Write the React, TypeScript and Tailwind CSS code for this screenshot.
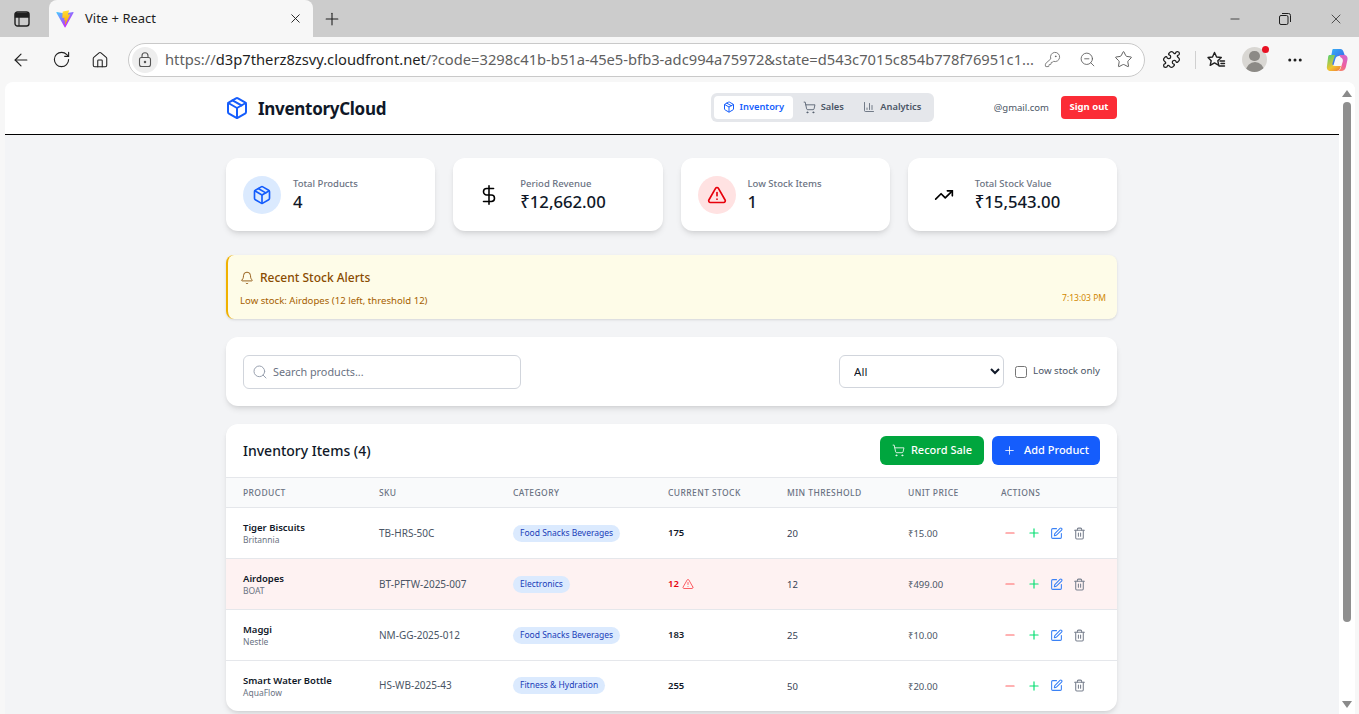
import {
  ArrowLeft,
  Bell,
  ChartColumn,
  DollarSign,
  Ellipsis,
  House,
  KeyRound,
  Minus,
  Package,
  Plus,
  Puzzle,
  RotateCw,
  Search,
  ShoppingCart,
  SquarePen,
  Star,
  Trash2,
  TrendingUp,
  TriangleAlert,
  X,
  ZoomOut,
} from "lucide-react"

const products = [
  { name: "Tiger Biscuits", brand: "Britannia", sku: "TB-HRS-50C", category: "Food Snacks Beverages", stock: 175, min: 20, price: "₹15.00" },
  { name: "Airdopes", brand: "BOAT", sku: "BT-PFTW-2025-007", category: "Electronics", stock: 12, min: 12, price: "₹499.00", low: true },
  { name: "Maggi", brand: "Nestle", sku: "NM-GG-2025-012", category: "Food Snacks Beverages", stock: 183, min: 25, price: "₹10.00" },
  { name: "Smart Water Bottle", brand: "AquaFlow", sku: "HS-WB-2025-43", category: "Fitness & Hydration", stock: 255, min: 50, price: "₹20.00" },
]

function ViteLogo() {
  return (
    <svg width="18" height="18" viewBox="0 0 410 404">
      <defs>
        <linearGradient id="vite-a" x1="6" y1="33" x2="235" y2="344" gradientUnits="userSpaceOnUse">
          <stop stopColor="#41D1FF" />
          <stop offset="1" stopColor="#BD34FE" />
        </linearGradient>
        <linearGradient id="vite-b" x1="194" y1="8" x2="236" y2="293" gradientUnits="userSpaceOnUse">
          <stop stopColor="#FFEA83" />
          <stop offset="0.08" stopColor="#FFDD35" />
          <stop offset="1" stopColor="#FFA800" />
        </linearGradient>
      </defs>
      <path d="M399.6 59.5 215 389.7c-3.8 6.8-13.6 6.9-17.5.1L9.3 59.5c-4.2-7.4 2.1-16.4 10.5-14.9l184.8 33a10 10 0 0 0 3.6 0l180.9-33c8.4-1.5 14.7 7.4 10.5 14.9Z" fill="url(#vite-a)" />
      <path d="M292.9 1.6 156.3 28.4a5 5 0 0 0-4 4.6l-8.4 141.9a5 5 0 0 0 6.1 5.2l38-8.8a5 5 0 0 1 6 5.9l-11.3 55.2a5 5 0 0 0 6.4 5.8l23.5-7.1a5 5 0 0 1 6.4 5.8l-18 87c-1.1 5.4 6.1 8.4 9.1 3.7l2-3.1 111.4-222.3c1.9-3.7-1.3-8-5.4-7.2l-39.2 7.6a5 5 0 0 1-5.8-6.3l25.6-88.7a5 5 0 0 0-5.8-6.4Z" fill="url(#vite-b)" />
    </svg>
  )
}

function CopilotLogo() {
  return (
    <svg width="26" height="26" viewBox="0 0 26 26">
      <defs>
        <linearGradient id="cop-a" x1="4" y1="3" x2="17" y2="18" gradientUnits="userSpaceOnUse">
          <stop stopColor="#36b6f5" />
          <stop offset="1" stopColor="#3b5be8" />
        </linearGradient>
        <linearGradient id="cop-b" x1="3" y1="10" x2="14" y2="25" gradientUnits="userSpaceOnUse">
          <stop stopColor="#5fce6a" />
          <stop offset="0.6" stopColor="#f0c52e" />
          <stop offset="1" stopColor="#f27d3a" />
        </linearGradient>
        <linearGradient id="cop-c" x1="24" y1="6" x2="12" y2="23" gradientUnits="userSpaceOnUse">
          <stop stopColor="#c66be0" />
          <stop offset="0.6" stopColor="#ee5fa0" />
          <stop offset="1" stopColor="#f78a5a" />
        </linearGradient>
      </defs>
      <path d="M9 2h7.5c1.5 0 2.4 1 2.9 2.4L21 9h-6c-2 0-3 1-3.6 2.8L9.500 18H5L8 5c.2-1.800.6-3 1-3Z" fill="url(#cop-a)" />
      <path d="M5.500 8h5.500l-2.500 8c-.5 2 .5 3 2.500 3h6l-1 2.600c-.5 1.400-1.500 2.400-3.500 2.400H7c-3 0-4.700-2-4-5l1-8c.2-1.800.6-3 1.500-3Z" fill="url(#cop-b)" />
      <path d="M15 8h5c2.500 0 4 2 3.500 4.500l-1.500 7c-.5 3-2.500 4.500-5 4.500h-3c1.500-.5 2.300-1.500 2.800-3l2-6.500c.5-2-.6-3.500-2-4L15 8Z" fill="url(#cop-c)" />
    </svg>
  )
}

function TabsIcon() {
  return (
    <svg width="16" height="16" viewBox="0 0 16 16" fill="none" stroke="#1f1f1f" strokeWidth="1.400">
      <rect x="1" y="1" width="14" height="14" rx="2.500" />
      <path d="M1.500 2.500h13v3.500h-13z" fill="#1f1f1f" />
      <path d="M5 6v9" strokeWidth="1.100" />
    </svg>
  )
}

function RestoreIcon() {
  return (
    <svg width="12" height="12" viewBox="0 0 12 12" fill="none" stroke="#1f1f1f" strokeWidth="1">
      <rect x="0.500" y="2.500" width="8.500" height="9" rx="1.500" />
      <path d="M3 .5h6.500a2 2 0 0 1 2 2V9" />
    </svg>
  )
}

function FavoritesIcon() {
  return (
    <svg width="20" height="20" viewBox="0 0 20 20" fill="none" stroke="#1f1f1f" strokeWidth="1.400" strokeLinejoin="round">
      <path d="M8.500 2.500 10.600 7l4.700.5-3.500 3.200 1 4.600-4.300-2.400-4.300 2.400 1-4.600L2 7.500 6.500 7Z" />
      <path d="M14 11h4.500M15 13.500h3.500M13 16h5.500" strokeLinecap="round" />
    </svg>
  )
}

function BrowserChrome() {
  return (
    <>
      <div className="h-[37px] flex bg-[#cccccc] text-[#1f1f1f]">
        <div className="w-[49px] flex items-center justify-center pr-[5px]">
          <TabsIcon />
        </div>
        <div className="w-[264px] h-[37px] rounded-t-lg bg-[#f7f7f7] flex items-center pl-[7px] pr-[10px]">
          <ViteLogo />
          <span className="ml-[11px] text-[13px]">Vite + React</span>
          <X size={15} strokeWidth={1.500} className="ml-auto" />
        </div>
        <div className="w-[38px] flex items-center justify-center">
          <Plus size={20} strokeWidth={1.300} />
        </div>
        <div className="ml-auto flex items-center h-[37px] pr-[15px] gap-[37px]">
          <Minus size={14} strokeWidth={1.300} />
          <RestoreIcon />
          <X size={16} strokeWidth={1.100} />
        </div>
      </div>
      <div className="h-[45px] bg-[#f7f7f7] flex items-center pl-[11px] text-[#1f1f1f]">
        <ArrowLeft size={20} strokeWidth={1.400} />
        <RotateCw size={19} strokeWidth={1.400} className="ml-[21px]" />
        <House size={18} strokeWidth={1.400} className="ml-[20px]" />
        <div className="ml-[19px] w-[1017px] h-[34px] rounded-full border border-[#c9c9c9] bg-white flex items-center pl-[3px] pr-[11px]">
          <div className="w-[26px] h-[26px] rounded-full bg-[#eeeeee] flex items-center justify-center">
            <svg width="14" height="16" viewBox="0 0 14 16" fill="none" stroke="#555" strokeWidth="1.100">
              <rect x="1.500" y="5.500" width="11" height="9" rx="2" />
              <path d="M4 5.500V3.800a3 3 0 0 1 6 0v1.700" />
              <circle cx="7" cy="10" r="0.700" fill="#555" />
            </svg>
          </div>
          <span className="ml-[7px] text-[14.720px] text-[#5f5f5f] whitespace-nowrap">
            https://<span className="text-[#1f1f1f]">d3p7therz8zsvy.cloudfront.net</span>/?code=3298c41b-b51a-45e5-bfb3-adc994a75972&state=d543c7015c854b778f76951c1...
          </span>
          <div className="ml-auto flex items-center gap-[18px] text-[#5a5a5a]">
            <KeyRound size={17} strokeWidth={1.100} />
            <ZoomOut size={17} strokeWidth={1.200} />
            <Star size={19} strokeWidth={1.200} />
          </div>
        </div>
        <Puzzle size={19} strokeWidth={1.600} className="ml-[17px]" />
        <div className="ml-[14px] w-px h-[18px] bg-[#d0d0d0]" />
        <div className="ml-[10px]">
          <FavoritesIcon />
        </div>
        <div className="ml-[16px] relative w-[25px] h-[25px]">
          <div className="w-[25px] h-[25px] rounded-full bg-[#d9d7d3] overflow-hidden flex flex-col items-center">
            <div className="mt-[4px] w-[11px] h-[11px] rounded-full bg-[#8c8a86]" />
            <div className="mt-[1px] w-[18px] h-[12px] rounded-t-full bg-[#8c8a86]" />
          </div>
          <div className="absolute -top-[1px] -right-[2px] w-[7px] h-[7px] rounded-full bg-[#e81123]" />
        </div>
        <Ellipsis size={18} strokeWidth={2} className="ml-[19px]" />
        <div className="ml-[20px]">
          <CopilotLogo />
        </div>
      </div>
    </>
  )
}

function Header() {
  return (
    <header className="h-[53px] bg-white border-b border-black shrink-0">
      <div className="ml-[221px] w-[891px] h-full flex items-center">
        <Package size={24} strokeWidth={2} className="text-[#155dfc] -ml-[1px]" />
        <span className="ml-[9px] mt-[2px] text-[17px] font-bold tracking-[-0.300px] text-[#101828]">InventoryCloud</span>
        <nav className="ml-auto -mt-[2px] h-[29px] rounded-md bg-[#e5e7eb] flex items-center p-[3px] text-[9.300px] font-semibold text-[#4a5565]">
          <div className="h-[23px] w-[79px] rounded bg-white text-[#155dfc] flex items-center justify-center gap-[5px]">
            <Package size={12} />
            Inventory
          </div>
          <div className="h-[23px] w-[61px] flex items-center justify-center gap-[5px]">
            <ShoppingCart size={13} strokeWidth={1.500} />
            Sales
          </div>
          <div className="h-[23px] w-[77px] flex items-center justify-center gap-[5px]">
            <ChartColumn size={12} strokeWidth={1.500} />
            Analytics
          </div>
        </nav>
        <span className="ml-[60px] text-[9.500px] text-[#4a5565]">@gmail.com</span>
        <button className="ml-[12px] -mt-[2px] h-[23px] w-[56px] rounded bg-[#fb2c36] text-white text-[9.500px] font-bold">Sign out</button>
      </div>
    </header>
  )
}

function StatCard({ icon, tint, label, value }: { icon: React.ReactNode; tint: string; label: string; value: string }) {
  return (
    <div className="h-[73px] rounded-xl bg-white shadow-md flex items-center px-[17px]">
      <div className={`w-[38px] h-[38px] rounded-full flex items-center justify-center shrink-0 ${tint}`}>{icon}</div>
      <div className="ml-[12px] pt-[1px]">
        <div className="text-[9.500px] leading-[13px] font-medium text-[#6a7282]">{label}</div>
        <div className="text-[16.700px] leading-[24px] font-medium text-[#101828]">{value}</div>
      </div>
    </div>
  )
}

function Row({ p }: { p: (typeof products)[number] }) {
  return (
    <tr className={`h-[51px] last:h-[50px] border-b border-[#e5e7eb] last:border-b-0 ${p.low ? "bg-[#fef2f2]" : ""}`}>
      <td className="pl-[17px] pt-[2px]">
        <div className="text-[9.500px] leading-[12px] font-semibold text-[#101828]">{p.name}</div>
        <div className="text-[8.500px] leading-[12px] text-[#6a7282]">{p.brand}</div>
      </td>
      <td className="pl-[17px] text-[10px] text-[#4a5565]">{p.sku}</td>
      <td className="pl-[17px]">
        <span className="flex w-fit h-[17px] items-center rounded-full bg-[#dbeafe] px-[7px] text-[8.500px] text-[#193cb8] whitespace-nowrap">{p.category}</span>
      </td>
      <td className="pl-[17px] text-[9.500px] font-semibold">
        {p.low ? (
          <span className="flex items-center gap-[3px] text-[#e7000b]">
            {p.stock}
            <TriangleAlert size={12} className="text-[#fb2c36]" strokeWidth={1.500} />
          </span>
        ) : (
          <span className="text-[#101828]">{p.stock}</span>
        )}
      </td>
      <td className="pl-[17px] pt-[2px] text-[9.500px] text-[#364153]">{p.min}</td>
      <td className="pl-[17px] pt-[2px] text-[9.500px] text-[#4a5565]">{p.price}</td>
      <td className="pl-[19px]">
        <div className="flex items-center gap-[9.500px]">
          <Minus size={14} className="text-[#ff6467]" />
          <Plus size={14} className="text-[#05df72]" />
          <SquarePen size={13} className="text-[#3b82f6]" />
          <Trash2 size={13} className="text-[#7b8290]" />
        </div>
      </td>
    </tr>
  )
}

export default function App() {
  return (
    <div className="h-screen overflow-hidden flex flex-col bg-[#f7f7f7] [font-family:'Noto_Sans',sans-serif]">
      <BrowserChrome />
      <div className="flex-1 min-h-0 ml-[5px] mr-[4px] rounded-t-lg overflow-hidden flex bg-white">
        <div className="flex-1 min-w-0 bg-[#f3f4f6] overflow-hidden">
          <Header />
          <main className="ml-[221px] w-[891px] pt-[23px] flex flex-col">
            <div className="grid grid-cols-4 gap-[18px]">
              <StatCard icon={<Package size={20} className="text-[#155dfc]" />} tint="bg-[#dbeafe]" label="Total Products" value="4" />
              <StatCard icon={<DollarSign size={22} strokeWidth={1.700} className="text-black" />} tint="" label="Period Revenue" value="₹12,662.00" />
              <StatCard icon={<TriangleAlert size={20} className="text-[#e7000b]" />} tint="bg-[#ffe2e2]" label="Low Stock Items" value="1" />
              <StatCard icon={<TrendingUp size={20} className="text-black" />} tint="" label="Total Stock Value" value="₹15,543.00" />
            </div>

            <div className="mt-[24px] h-[64px] rounded-lg bg-[#fefce8] border-l-2 border-[#f0b100] shadow-sm pl-[12px] pr-[11px] pt-[14px]">
              <div className="flex items-center gap-[6px] text-[12px] font-medium text-[#894b00]">
                <Bell size={14} strokeWidth={1.500} />
                Recent Stock Alerts
              </div>
              <div className="mt-[7px] flex justify-between">
                <span className="text-[9.600px] text-[#a65f00]">Low stock: Airdopes (12 left, threshold 12)</span>
                <span className="text-[8.500px] text-[#d08700] -mt-[2px]">7:13:03 PM</span>
              </div>
            </div>

            <div className="mt-[18px] h-[69px] rounded-xl bg-white shadow-md flex items-center px-[17px]">
              <div className="w-[278px] h-[34px] rounded-md border border-[#d1d5dc] flex items-center pl-[8px]">
                <Search size={16} className="text-[#99a1af]" strokeWidth={1.500} />
                <input placeholder="Search products..." className="ml-[5px] pt-[1px] flex-1 min-w-0 text-[10.800px] outline-none placeholder:text-[#6a7282]" />
              </div>
              <select className="ml-auto w-[165px] h-[33px] rounded-md border border-[#d1d5dc] bg-white pl-[10px] pr-[2px] text-[11.500px] text-[#101828]">
                <option>All</option>
              </select>
              <label className="ml-[11px] flex items-center gap-[6px] text-[9.750px] text-[#4a5565]">
                <input type="checkbox" className="w-[12px] h-[12px]" />
                Low stock only
              </label>
            </div>

            <div className="mt-[18px] rounded-xl bg-white shadow-md overflow-hidden">
              <div className="h-[53px] flex items-center px-[17px]">
                <h2 className="text-[14px] font-medium text-[#101828]">Inventory Items (4)</h2>
                <button className="ml-auto h-[29px] w-[104px] rounded-md bg-[#00a63e] text-white text-[11px] font-medium flex items-center justify-center gap-[6px]">
                  <ShoppingCart size={13} strokeWidth={1.500} />
                  Record Sale
                </button>
                <button className="ml-[8px] h-[29px] w-[108px] rounded-md bg-[#155dfc] text-white text-[11px] font-medium flex items-center justify-center gap-[8px]">
                  <Plus size={13} strokeWidth={1.500} />
                  Add Product
                </button>
              </div>
              <table className="w-full table-fixed border-collapse">
                <colgroup>
                  <col className="w-[136px]" />
                  <col className="w-[134px]" />
                  <col className="w-[155px]" />
                  <col className="w-[119px]" />
                  <col className="w-[121px]" />
                  <col className="w-[93px]" />
                  <col className="w-[133px]" />
                </colgroup>
                <thead>
                  <tr className="h-[30px] bg-[#f9fafb] border-y border-[#e5e7eb] text-left text-[8.500px] font-medium text-[#6a7282] uppercase tracking-[0.400px]">
                    {["Product", "SKU", "Category", "Current Stock", "Min Threshold", "Unit Price", "Actions"].map((h) => (
                      <th key={h} className="pl-[17px] pt-[2px] font-medium">{h}</th>
                    ))}
                  </tr>
                </thead>
                <tbody>
                  {products.map((p) => (
                    <Row key={p.sku} p={p} />
                  ))}
                </tbody>
              </table>
            </div>
          </main>
        </div>
        <div className="w-[16px] shrink-0 bg-white flex flex-col items-center pt-[8px]">
          <div className="w-0 h-0 border-x-[5px] border-x-transparent border-b-[7px] border-b-[#8a8a8a]" />
          <div className="mt-[5px] w-[8px] h-[520px] rounded-full bg-[#8f8f8f]" />
          <div className="mt-auto mb-[6px] w-0 h-0 border-x-[5px] border-x-transparent border-t-[7px] border-t-[#8a8a8a]" />
        </div>
      </div>
    </div>
  )
}
